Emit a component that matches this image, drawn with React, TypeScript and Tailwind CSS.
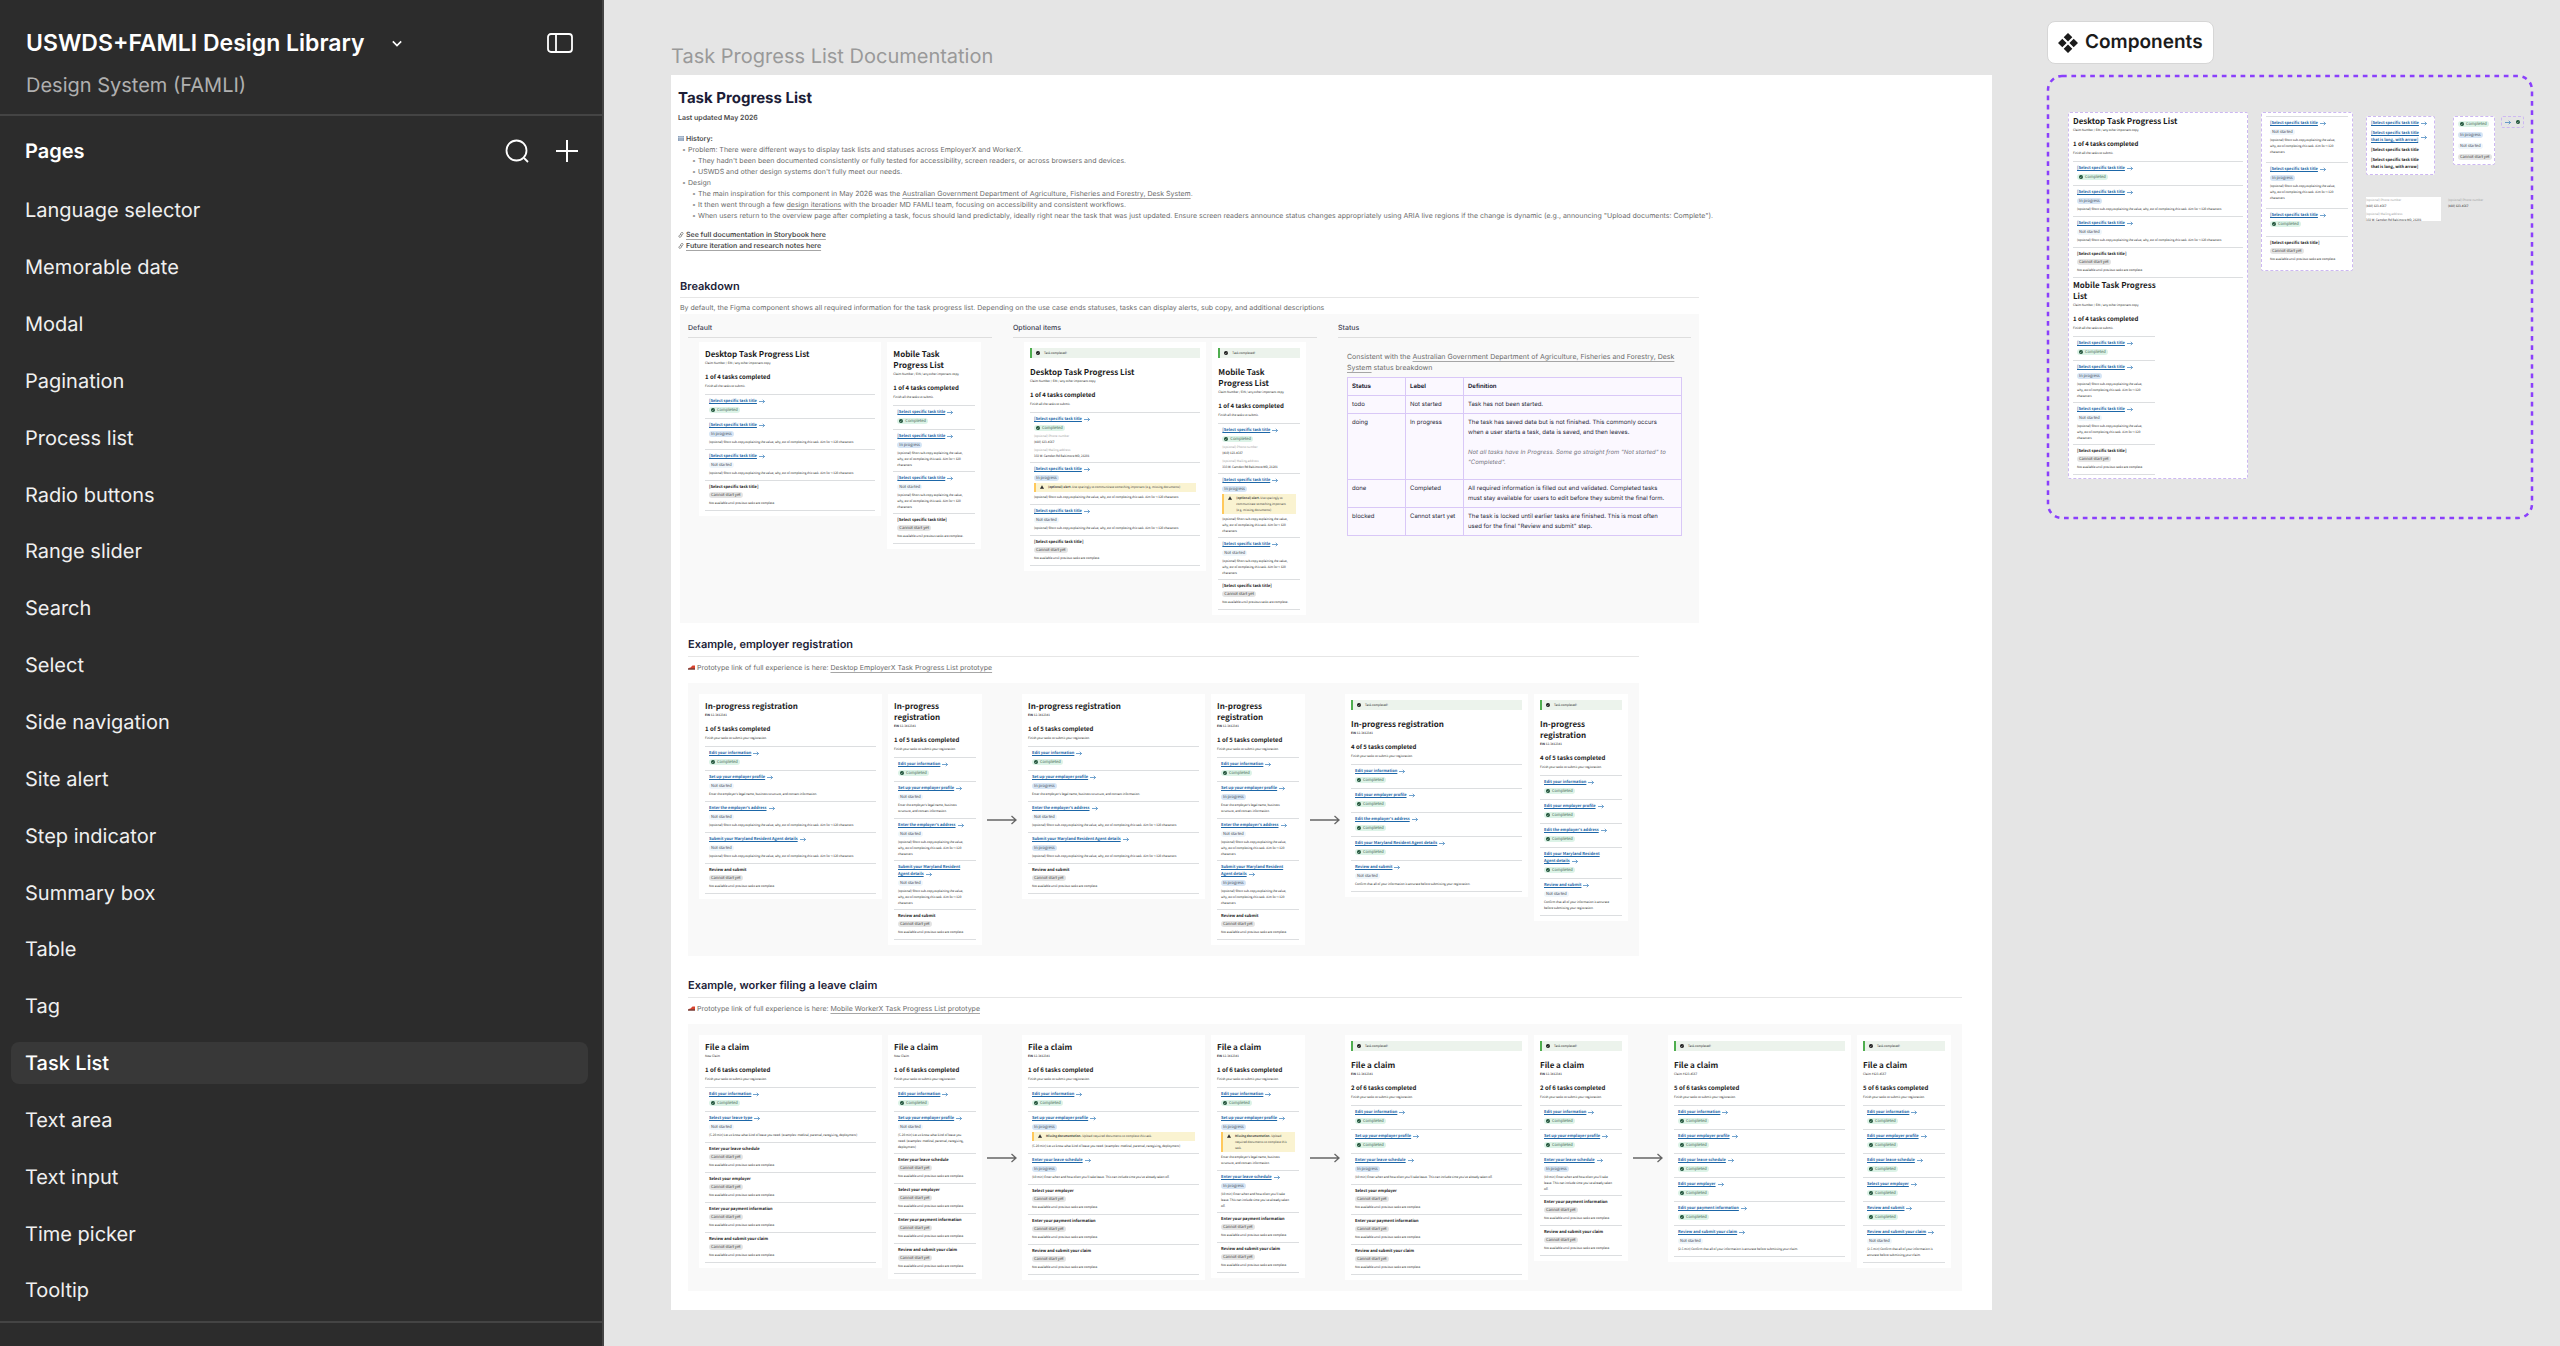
import type { ReactNode } from 'react'

type Status = 'todo' | 'doing' | 'done' | 'blocked'
type Field = { label: string; value: string }
type Task = { title: string; status: Status; desc?: string; fields?: Field[]; alert?: { strong: string; text: string } }
type List = { title: string; sub: ReactNode; progress: string; hint: string; tasks: Task[]; success?: boolean }

const pages = [
  'Language selector', 'Memorable date', 'Modal', 'Pagination', 'Process list', 'Radio buttons', 'Range slider',
  'Search', 'Select', 'Side navigation', 'Site alert', 'Step indicator', 'Summary box', 'Table', 'Tag', 'Task List',
  'Text area', 'Text input', 'Time picker', 'Tooltip',
]

// A newline in a text is a break on mobile only, desktop cards run it on one line
const SUBCOPY = '(optional) Short sub-copy explaining the value,\nwhy, etc of completing this task. Aim for < 120\ncharacters'
const BLOCKED = 'Not available until previous tasks are complete.'
const LEAVE_TYPE = '(5-20 min) Let us know what kind of leave you\nneed. (examples: medical, parental, caregiving,\ndeployment)'
const SCHEDULE = '(10 min) Enter when and how often you\'ll take\nleave. This can include time you\'ve already taken\noff.'
const LEGAL = 'Enter the employer\'s legal name, business\nstructure, and contact information.'
const FINISH = 'Finish your tasks to submit your registration.'
const TASK = '[Select specific task title'

const done = (title: string): Task => ({ title, status: 'done' })
const doing = (title: string, desc: string): Task => ({ title, status: 'doing', desc })
const todo = (title: string, desc: string): Task => ({ title, status: 'todo', desc })
const blocked = (title: string): Task => ({ title, status: 'blocked', desc: BLOCKED })

const defaultTasks = [done(TASK), doing(TASK, SUBCOPY), todo(TASK, SUBCOPY), blocked(TASK + ']')]
const fields = [
  { label: '(optional) Phone number', value: '(410) 123-4567' },
  { label: '(optional) Mailing address', value: '333 W. Camden Rd Baltimore MD, 21201' },
]
const optionalTasks: Task[] = [
  { title: TASK, status: 'done', fields },
  { title: TASK, status: 'doing', desc: SUBCOPY, alert: { strong: '(optional) alert.', text: ' Use sparingly to\ncommunicate something important\n(e.g. missing documents)' } },
  todo(TASK, SUBCOPY),
  blocked(TASK + ']'),
]
const CLAIM_NO = 'Claim Number / EIN / any other important copy'
const desktopDefault: List = { title: 'Desktop Task Progress List', sub: CLAIM_NO, progress: '1 of 4 tasks completed', hint: 'Finish all the tasks to submit.', tasks: defaultTasks }
const mobileDefault: List = { ...desktopDefault, title: 'Mobile Task\nProgress List' }

const ein = <><b>EIN</b> 12-3412341</>
const registration: List = {
  title: 'In-progress\nregistration', sub: ein, progress: '1 of 5 tasks completed', hint: FINISH,
  tasks: [done('Edit your information'), todo('Set up your employer profile', LEGAL), todo('Enter the employer\'s address', SUBCOPY), todo('Submit your Maryland Resident\nAgent details', SUBCOPY), blocked('Review and submit')],
}
const registrationStarted: List = {
  ...registration,
  tasks: [done('Edit your information'), doing('Set up your employer profile', LEGAL), todo('Enter the employer\'s address', SUBCOPY), doing('Submit your Maryland Resident\nAgent details', SUBCOPY), blocked('Review and submit')],
}
const registrationReady: List = {
  ...registration, progress: '4 of 5 tasks completed', success: true,
  tasks: [done('Edit your information'), done('Edit your employer profile'), done('Edit the employer\'s address'), done('Edit your Maryland Resident\nAgent details'), todo('Review and submit', 'Confirm that all of your information is accurate\nbefore submitting your registration.')],
}

const claim = (progress: string, sub: ReactNode, tasks: Task[], success = false): List => ({ title: 'File a claim', sub, progress: `${progress} of 6 tasks completed`, hint: FINISH, tasks, success })
const info = done('Edit your information')
const pay = blocked('Enter your payment information')
const review = blocked('Review and submit your claim')
const employer = blocked('Select your employer')
const missing = { strong: 'Missing documentation.', text: ' Upload\nrequired documents to complete this\ntask.' }
const claimSteps: [List, List][] = [
  [
    claim('1', 'New Claim', [info, todo('Select your leave type', LEAVE_TYPE), blocked('Enter your leave schedule'), employer, pay, review]),
    claim('1', 'New Claim', [info, todo('Set up your employer profile', LEAVE_TYPE), blocked('Enter your leave schedule'), employer, pay, review]),
  ],
  [
    claim('1', ein, [info, { title: 'Set up your employer profile', status: 'doing', desc: LEAVE_TYPE, alert: missing }, doing('Enter your leave schedule', SCHEDULE), employer, pay, review]),
    claim('1', ein, [info, { title: 'Set up your employer profile', status: 'doing', desc: LEGAL, alert: missing }, doing('Enter your leave schedule', SCHEDULE), pay, review]),
  ],
  [
    claim('2', ein, [info, done('Set up your employer profile'), doing('Enter your leave schedule', SCHEDULE), employer, pay, review], true),
    claim('2', ein, [info, done('Set up your employer profile'), doing('Enter your leave schedule', SCHEDULE), pay, review], true),
  ],
  [
    claim('5', 'Claim #123-4567', [info, done('Edit your employer profile'), done('Edit your leave schedule'), done('Edit your employer'), done('Edit your payment information'), todo('Review and submit your claim', '(2-5 min) Confirm that all of your information is\naccurate before submitting your claim.')], true),
    claim('5', 'Claim #123-4567', [info, done('Edit your employer profile'), done('Edit your leave schedule'), done('Select your employer'), done('Review and submit'), todo('Review and submit your claim', '(2-5 min) Confirm that all of your information is\naccurate before submitting your claim.')], true),
  ],
]

const badges: Record<Status, { label: string; className: string }> = {
  done: { label: 'Completed', className: 'bg-[#dcf3e7] text-[#3f5f50]' },
  doing: { label: 'In progress', className: 'bg-[#d6e5f5] text-[#3d4551]' },
  todo: { label: 'Not started', className: 'bg-[#eff6fb] text-[#3d4551]' },
  blocked: { label: 'Cannot start yet', className: 'bg-[#e4e4e4] text-[#3d3d3d]' },
}

const flat = (s: string) => s.replace(/\n/g, ' ')

function Check({ className }: { className: string }) {
  return (
    <svg viewBox="0 0 10 10" className={`w-[4px] h-[4px] shrink-0 ${className}`}>
      <circle cx="5" cy="5" r="5" fill="currentColor" />
      <path d="M2.6 5.2l1.7 1.7 3.2-3.5" fill="none" stroke="#fff" strokeWidth="1.1" />
    </svg>
  )
}

function TaskArrow() {
  return (
    <svg viewBox="0 0 12 10" className="w-[6px] h-[5px] shrink-0 text-[#2672b5]" fill="none" stroke="currentColor" strokeWidth="1.3">
      <path d="M0 5h11M7.5 1.5L11 5 7.5 8.5" />
    </svg>
  )
}

function StepArrow() {
  return (
    <svg viewBox="0 0 30 10" className="w-[30px] h-[10px] shrink-0 self-center" fill="none" stroke="#666" strokeWidth="1.3">
      <path d="M0 5h29M24.5 1l4.5 4-4.5 4" />
    </svg>
  )
}

function Badge({ status }: { status: Status }) {
  const b = badges[status]
  return (
    <span className={`inline-flex items-center gap-[2px] h-[6px] w-fit rounded-full px-[2px] text-[4px] leading-[6px] whitespace-nowrap ${b.className}`}>
      {status === 'done' && <Check className="text-[#1c5136]" />}
      {b.label}
    </span>
  )
}

function TaskTitle({ title, link, center }: { title: string; link: boolean; center?: boolean }) {
  const lines = title.split('\n')
  if (!link) return <div className="text-[4px] leading-[7px] font-bold text-[#1b1b1b] whitespace-pre">{title}</div>
  return (
    <div className={`flex gap-[2px] text-[4px] leading-[7px] font-bold ${center ? 'items-center' : 'items-end'}`}>
      {center || lines.length === 1
        ? <a href="#" className="text-[#1d67a8] underline whitespace-pre">{title}</a>
        : <a href="#" className="text-[#1d67a8] whitespace-nowrap"><span className="underline">{lines[0]}</span><br /><span className="flex items-center gap-[2px]"><span className="underline">{lines[1]}</span><TaskArrow /></span></a>}
      {(center || lines.length === 1) && <span className={center ? '' : 'pb-px'}><TaskArrow /></span>}
    </div>
  )
}

function Fields({ items }: { items: Field[] }) {
  return (
    <dl className="flex flex-col gap-[2px] text-[3px] leading-[6px] whitespace-nowrap">
      {items.map(f => (
        <div key={f.label}><dt className="text-[#a0a0a0]">{f.label}</dt><dd className="text-[#1b1b1b]">{f.value}</dd></div>
      ))}
    </dl>
  )
}

function Tasks({ tasks, mobile }: { tasks: Task[]; mobile?: boolean }) {
  const text = (s: string) => (mobile ? s : flat(s))
  return (
    <ul>
      {tasks.map((t, i) => {
        const tall = !!t.fields || (mobile && t.desc?.split('\n').length === 3)
        const pb = tall ? 'pb-[3px]' : t.desc ? 'pb-[4px]' : 'pb-[5px]'
        return (
          <li key={i} className={`border-t border-[#dcdee0] px-[4px] pt-[3px] flex flex-col ${pb}`}>
            <TaskTitle title={text(t.title)} link={t.status !== 'blocked'} />
            <div className={t.status === 'blocked' ? 'flex pt-px' : 'flex pt-[2px]'}><Badge status={t.status} /></div>
            {t.fields && <div className="pt-[2px]"><Fields items={t.fields} /></div>}
            {t.alert && (
              <div className="mt-[2px] flex gap-[4px] min-h-[9px] py-px pl-[4px] border-l-2 border-[#ffc95c] bg-[#faf3d1] text-[3px] leading-[6px] text-[#3d3d3d]">
                <svg viewBox="0 0 10 9" className="w-[4px] h-[4px] mt-px shrink-0"><path d="M5 0l5 9H0z" fill="#1b1b1b" /><path d="M5 3v3M5 7v1" stroke="#fff" strokeWidth=".8" /></svg>
                <p className="whitespace-pre"><b>{t.alert.strong}</b>{text(t.alert.text)}</p>
              </div>
            )}
            {t.desc && <p className="pt-[2px] text-[3px] leading-[6px] text-[#1b1b1b] whitespace-pre">{text(t.desc)}</p>}
          </li>
        )
      })}
    </ul>
  )
}

function TaskList({ list, mobile }: { list: List; mobile?: boolean }) {
  return (
    <div className="text-[#1b1b1b] font-['Noto_Sans_CJK_SC',sans-serif]">
      {list.success && (
        <div className="mb-[8px] h-[10px] flex items-center gap-[4px] pl-[4px] border-l-2 border-[#4fae4f] bg-[#ecf3ec] text-[3px] leading-[6px]">
          <Check className="text-[#1b1b1b]" />Task completed!
        </div>
      )}
      <div className="pt-px pb-[5px]">
        <h4 className="text-[8px] leading-[11px] font-bold whitespace-pre">{mobile ? list.title : flat(list.title)}</h4>
        <p className="text-[3px] leading-[6px] whitespace-nowrap">{list.sub}</p>
        <h5 className="pt-[7px] text-[6px] leading-[8px] font-bold whitespace-nowrap">{list.progress}</h5>
        <p className="pt-[2px] text-[3px] leading-[6px] whitespace-nowrap">{list.hint}</p>
      </div>
      <div className="border-b border-[#dcdee0]"><Tasks tasks={list.tasks} mobile={mobile} /></div>
    </div>
  )
}

function Pair({ desktop, mobile }: { desktop: List; mobile: List }) {
  return (
    <div className="flex items-start gap-[6px]">
      <div className="w-[183px] bg-white px-[6px] pt-[6px] pb-[5px]"><TaskList list={desktop} /></div>
      <div className="w-[94px] bg-white px-[6px] pt-[6px] pb-[5px]"><TaskList list={mobile} mobile /></div>
    </div>
  )
}

function Flow({ steps }: { steps: [List, List][] }) {
  return (
    <div className="flex gap-[5px] bg-[#f9f9f9] p-[11px]">
      {steps.map(([desktop, mobile], i) => (
        <div key={i} className="contents">
          {i > 0 && <StepArrow />}
          <Pair desktop={desktop} mobile={mobile} />
        </div>
      ))}
    </div>
  )
}

function Example({ title, link, steps }: { title: string; link: string; steps: [List, List][] }) {
  return (
    <section className="ml-[8px] w-fit">
      <h2 className="pb-[4px] border-b border-[#e6e6e6] text-[11px] leading-[16px] font-semibold text-[#1c1d37]">{title}</h2>
      <p className="flex items-center gap-[2px] pt-[5px] pb-[10px] text-[7px] leading-[11px] text-[#6b6b6b]">
        <svg viewBox="0 0 14 10" className="w-[7px] h-[5px]"><path d="M1 6l4-1 4-4h5v8H0z" fill="#d8432f" /><path d="M0 8h14" stroke="#4a3a3a" strokeWidth="2" /></svg>
        <span>Prototype link of full experience is here: <a href="#" className="underline underline-offset-2 decoration-[#a6a6a6]">{link}</a></span>
      </p>
      <Flow steps={steps} />
    </section>
  )
}

function Column({ title, children }: { title: string; children: ReactNode }) {
  return (
    <div>
      <h3 className="h-[20px] pt-[5px] border-b border-[#dedede] text-[7px] leading-[10px] font-medium text-[#3a3b50]">{title}</h3>
      {children}
    </div>
  )
}

const statuses = [
  ['todo', 'Not started', 'Task has not been started.'],
  ['doing', 'In progress', 'The task has saved data but is not finished. This commonly occurs\nwhen a user starts a task, data is saved, and then leaves.'],
  ['done', 'Completed', 'All required information is filled out and validated. Completed tasks\nmust stay available for users to edit before they submit the final form.'],
  ['blocked', 'Cannot start yet', 'The task is locked until earlier tasks are finished. This is most often\nused for the final "Review and submit" step.'],
]

function StatusTable() {
  const cell = 'border border-[#d9c8f7] px-[4px] pt-[4px] pb-[3px] align-top text-left'
  return (
    <table className="w-full table-fixed border-collapse bg-[#fbf8ff] text-[6px] leading-[10px] text-[#2a2a3a]">
      <thead>
        <tr><th className={`w-[58px] ${cell}`}>Status</th><th className={`w-[58px] ${cell}`}>Label</th><th className={cell}>Definition</th></tr>
      </thead>
      <tbody>
        {statuses.map(([status, label, definition]) => (
          <tr key={status}>
            <td className={cell}>{status}</td>
            <td className={`whitespace-nowrap ${cell}`}>{label}</td>
            <td className={`whitespace-pre ${cell}`}>
              {definition}
              {status === 'doing' && <p className="pt-[10px] pb-[8px] italic text-[#77777f]">{'Not all tasks have In Progress. Some go straight from "Not started" to\n"Completed".'}</p>}
            </td>
          </tr>
        ))}
      </tbody>
    </table>
  )
}

function LinkIcon() {
  return (
    <svg viewBox="0 0 12 12" className="w-[6px] h-[6px] shrink-0" fill="none" stroke="#777" strokeWidth="1.5">
      <rect x="5.5" y=".5" width="4" height="6" rx="2" transform="rotate(40 7.5 3.5)" /><rect x="2.5" y="5" width="4" height="6" rx="2" transform="rotate(40 4.5 8)" />
    </svg>
  )
}

function Documentation() {
  return (
    <div className="w-fit bg-white pl-[9px] pr-[30px] pt-[14px] pb-[19px]">
      <h1 className="-ml-[2px] text-[15px] leading-[18px] font-bold text-[#1c1d37]">Task Progress List</h1>
      <div className="-ml-[2px] text-[7px] leading-[11px] text-[#6b6b6b]">
        <p className="pt-[5px] font-semibold text-[#4a4a4a]">Last updated May 2026</p>
        <p className="pt-[10px] flex items-center gap-[2px] font-semibold text-[#4a4a4a]">
          <svg viewBox="0 0 12 10" className="w-[6px] h-[5px]"><rect width="12" height="10" fill="#8fa3bd" /><path d="M0 3h12M4 0v10M8 0v10" stroke="#dfe6ee" /></svg>
          History:
        </p>
        <ul className="list-none">
          <Item>Problem: There were different ways to display task lists and statuses across EmployerX and WorkerX.
            <ul>
              <Item>They hadn't been been documented consistently or fully tested for accessibility, screen readers, or across browsers and devices.</Item>
              <Item>USWDS and other design systems don't fully meet our needs.</Item>
            </ul>
          </Item>
          <Item>Design
            <ul>
              <Item>The main inspiration for this component in May 2026 was the <a href="#" className="underline underline-offset-2 decoration-[#a6a6a6]">Australian Government Department of Agriculture, Fisheries and Forestry, Desk System</a>.</Item>
              <Item>It then went through a few <a href="#" className="underline underline-offset-2 decoration-[#a6a6a6]">design iterations</a> with the broader MD FAMLI team, focusing on accessibility and consistent workflows.</Item>
              <Item>When users return to the overview page after completing a task, focus should land predictably, ideally right near the task that was just updated. Ensure screen readers announce status changes appropriately using ARIA live regions if the change is dynamic (e.g., announcing "Upload documents: Complete").</Item>
            </ul>
          </Item>
        </ul>
        <p className="pt-[8px] flex items-center gap-[2px] font-semibold text-[#4a4a4a]"><LinkIcon /><a href="#" className="underline underline-offset-2 decoration-[#a6a6a6]">See full documentation in Storybook here</a></p>
        <p className="flex items-center gap-[2px] font-semibold text-[#4a4a4a]"><LinkIcon /><a href="#" className="underline underline-offset-2 decoration-[#a6a6a6]">Future iteration and research notes here</a></p>
      </div>

      <section className="w-[1019px] pt-[27px]">
        <h2 className="pb-[3px] border-b border-[#e6e6e6] text-[11px] leading-[16px] font-semibold text-[#1c1d37]">Breakdown</h2>
        <p className="pt-[4px] pb-px text-[7px] leading-[11px] text-[#6b6b6b]">By default, the Figma component shows all required information for the task progress list. Depending on the use case ends statuses, tasks can display alerts, sub copy, and additional descriptions</p>
        <div className="grid grid-cols-[304px_304px_1fr] gap-[21px] bg-[#f9f9f9] px-[8px] pt-[4px] pb-[8px]">
          <Column title="Default">
            <div className="px-[11px] pt-[4px]"><Pair desktop={desktopDefault} mobile={mobileDefault} /></div>
          </Column>
          <Column title="Optional items">
            <div className="px-[11px] pt-[4px]"><Pair desktop={{ ...desktopDefault, tasks: optionalTasks, success: true }} mobile={{ ...mobileDefault, tasks: optionalTasks, success: true }} /></div>
          </Column>
          <Column title="Status">
            <div className="px-[9px] pt-[13px]">
              <p className="pb-[4px] text-[7px] leading-[11px] text-[#6b6b6b]">Consistent with the <a href="#" className="underline underline-offset-2 decoration-[#a6a6a6]">Australian Government Department of Agriculture, Fisheries and Forestry, Desk System</a> status breakdown</p>
              <StatusTable />
            </div>
          </Column>
        </div>
      </section>

      <div className="pt-[13px]">
        <Example title="Example, employer registration" link="Desktop EmployerX Task Progress List prototype" steps={[[registration, registration], [registrationStarted, registrationStarted], [registrationReady, registrationReady]]} />
      </div>
      <div className="pt-[21px]">
        <Example title="Example, worker filing a leave claim" link="Mobile WorkerX Task Progress List prototype" steps={claimSteps} />
      </div>
    </div>
  )
}

function Item({ children }: { children: ReactNode }) {
  return <li className="flex pl-[4px]"><span className="w-[6px] shrink-0 text-[#999]">•</span><div>{children}</div></li>
}

function Variants({ className, children }: { className: string; children: ReactNode }) {
  return <div className={`shrink-0 border border-dashed border-[#cdb8f2] rounded-[2px] ${className}`}>{children}</div>
}

function Components() {
  return (
    <section className="flex-1 min-w-0 pt-[21px]">
      <h2 className="w-fit h-[43px] px-[10px] flex items-center gap-[7px] rounded-lg border border-[#d6d6d6] bg-white text-[19px] font-semibold text-[#1b1b1b]">
        <svg viewBox="0 0 20 20" className="w-[20px] h-[20px]" fill="currentColor"><path d="M10 0l4.300 4.300L10 8.600 5.700 4.300zM4.300 5.700l4.300 4.300-4.300 4.300L0 10zM15.700 5.700L20 10l-4.300 4.300L11.400 10zM10 11.400l4.300 4.300L10 20l-4.300-4.300z" /></svg>
        Components
      </h2>
      <div className="relative mt-[11px] h-[444px] pt-[37px] pl-[21px] flex items-start gap-[13px] font-['Noto_Sans_CJK_SC',sans-serif]">
        <svg className="absolute inset-0 w-full h-full overflow-visible"><rect x="1" y="1" width="484" height="442" rx="14" fill="none" stroke="#8a3ffc" strokeWidth="2.500" strokeDasharray="4.700 4.700" /></svg>
        <Variants className="w-[180px] bg-white pt-[2px] px-[4px] pb-[3px]">
          <TaskList list={desktopDefault} />
          <div className="w-[82px] pt-px"><TaskList list={{ ...desktopDefault, title: 'Mobile Task Progress\nList' }} mobile /></div>
        </Variants>
        <Variants className="w-[92px] bg-white pt-[3px] px-[4px]">
          {[todo(TASK, SUBCOPY), doing(TASK, SUBCOPY), done(TASK), blocked(TASK + ']')].map((t, i) => (
            <div key={i} className="pb-[4px]"><Tasks tasks={[t]} mobile /></div>
          ))}
        </Variants>
        <div className="pt-[4px] flex flex-col gap-[22px]">
          <div className="flex items-start">
            <Variants className="w-[69px] bg-white px-[4px] py-[3px] flex flex-col gap-[3px]">
              <TaskTitle title={TASK} link />
              <TaskTitle title={TASK + '\nthat is long, with arrow]'} link center />
              <TaskTitle title={TASK} link={false} />
              <TaskTitle title={TASK + '\nthat is long, with arrow]'} link={false} />
            </Variants>
            <Variants className="ml-[18px] w-[42px] bg-white px-[4px] py-[4px] flex flex-col gap-[5px]">
              <Badge status="done" /><Badge status="doing" /><Badge status="todo" /><Badge status="blocked" />
            </Variants>
            <Variants className="ml-[6px] w-[23px] h-[12px] flex items-center justify-between px-[3px]">
              <TaskArrow /><Check className="text-[#1c5136]" />
            </Variants>
          </div>
          <div className="flex items-start gap-[7px]">
            <div className="w-[75px] h-[24px] bg-white"><Fields items={fields} /></div>
            <Fields items={fields.slice(0, 1)} />
          </div>
        </div>
      </div>
    </section>
  )
}

function Sidebar() {
  return (
    <aside className="w-[604px] shrink-0 flex flex-col bg-[#2c2c2c] border-r-2 border-[#444] text-white">
      <header className="h-[116px] shrink-0 border-b-2 border-[#444] pl-[26px] pr-[29px] pt-[26px]">
        <div className="flex items-center h-[34px]">
          <button className="flex items-center gap-[27px] text-[23px] font-semibold">
            USWDS+FAMLI Design Library
            <svg viewBox="0 0 12 8" className="w-[10px] h-[7px]" fill="none" stroke="currentColor" strokeWidth="2"><path d="M1 1.500l5 5 5-5" /></svg>
          </button>
          <button aria-label="Toggle sidebar" className="ml-auto">
            <svg viewBox="0 0 26 20" className="w-[26px] h-[20px]" fill="none" stroke="currentColor" strokeWidth="1.800"><rect x="1" y="1" width="24" height="18" rx="3" /><path d="M9 1v18" /></svg>
          </button>
        </div>
        <p className="pt-[11px] text-[20px] leading-[28px] text-[#b0b0b0]">Design System (FAMLI)</p>
      </header>
      <div className="h-[66px] shrink-0 flex items-center pl-[25px] pr-[24px] pt-[4px]">
        <h2 className="text-[20px] font-semibold">Pages</h2>
        <button aria-label="Search pages" className="ml-auto">
          <svg viewBox="0 0 24 24" className="w-[24px] h-[24px]" fill="none" stroke="currentColor" strokeWidth="1.800"><circle cx="11.500" cy="11.500" r="10" /><path d="M19 19l4 4" /></svg>
        </button>
        <button aria-label="Add page" className="ml-[27px]">
          <svg viewBox="0 0 22 22" className="w-[22px] h-[22px]" fill="none" stroke="currentColor" strokeWidth="2"><path d="M11 0v22M0 11h22" /></svg>
        </button>
      </div>
      <nav className="flex-1 flex flex-col pl-[11px] pr-[14px] pb-[2px]">
        {pages.map(p => (
          <div key={p} className="flex-1 flex items-center">
            <a href="#" className={p === 'Task List' ? 'flex-1 h-[42px] flex items-center rounded-lg bg-[#383838] px-[14px] text-[20px] font-medium' : 'flex-1 h-[42px] flex items-center px-[14px] text-[20px] text-[#f0f0f0]'}>{p}</a>
          </div>
        ))}
      </nav>
      <div className="h-[25px] shrink-0 border-t-2 border-[#444]" />
    </aside>
  )
}

export default function App() {
  return (
    <div className="flex min-h-screen bg-[#e5e5e5] font-[Inter,sans-serif] [text-rendering:geometricPrecision]">
      <Sidebar />
      <main className="flex-1 min-w-0 flex items-start gap-[55px] pl-[67px] pr-[27px]">
        <div className="shrink-0 pt-[42px]">
          <h2 className="h-[33px] text-[20px] leading-[28px] text-[#999]">Task Progress List Documentation</h2>
          <Documentation />
        </div>
        <Components />
      </main>
    </div>
  )
}
